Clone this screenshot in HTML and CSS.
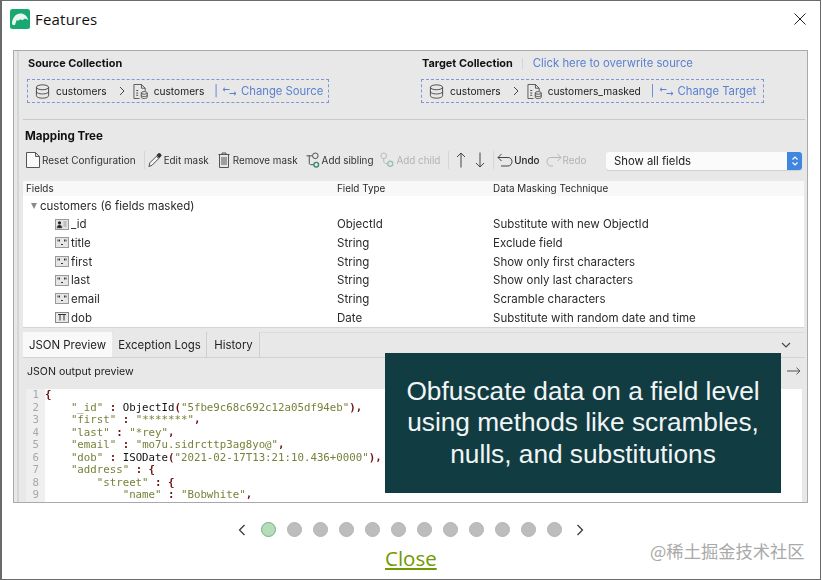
FILE: index.html
```html
<!DOCTYPE html>
<html lang="en">
<head>
<meta charset="utf-8">
<title>Features</title>
<link rel="stylesheet" href="styles.css">
</head>
<body>
<svg class="defs" width="0" height="0" aria-hidden="true">
  <symbol id="db" viewBox="0 0 16 16"><g fill="none" stroke="#444" stroke-width="1"><ellipse cx="8" cy="3.5" rx="6.5" ry="2.6"/><path d="M1.5 3.5v9c0 1.5 3 2.6 6.5 2.600s6.500-1.100 6.500-2.600v-9M1.500 8c0 1.500 3 2.600 6.500 2.600s6.500-1.100 6.500-2.600"/></g></symbol>
  <symbol id="coll" viewBox="0 0 16 16"><g fill="none" stroke="#444" stroke-width=".9"><path d="M1 .5h8l4 4v3M1 .5v15h6M9 .5v4h4"/><path d="M3.500 7h2M3.500 9.500h2M3.500 12h2" stroke-width="1.100"/><ellipse cx="12" cy="9.500" rx="3.200" ry="1.400"/><path d="M8.800 9.500v4.600c0 .8 1.400 1.400 3.200 1.400s3.200-.6 3.200-1.400V9.500M8.800 12c0 .8 1.400 1.400 3.200 1.400s3.200-.6 3.200-1.400"/></g></symbol>
  <symbol id="swap" viewBox="0 0 15 9"><g fill="none" stroke="#5a80d0" stroke-width="1"><path d="M1 2.500h6.500M3 .7 1 2.500l2 1.800M7.500 6.500H14M12 4.700l2 1.800-2 1.800"/></g></symbol>
  <symbol id="fstr" viewBox="0 0 14 11"><rect x=".5" y=".5" width="13" height="10" fill="#e6e6e6" stroke="#999"/><path d="M3 2.500v2M4.500 2.500v2M9.500 2.500v2M11 2.500v2M6 7.500h2" stroke="#333" stroke-width="1"/></symbol>
</svg>
<main class="dialog">
  <header class="titlebar">
    <svg class="logo" viewBox="0 0 20 20"><rect width="20" height="20" rx="2.500" fill="#1aa872"/><path d="M2 14.500C2.300 8.500 6 4.500 10.500 4.500c3.700 0 6.300 2.300 7.500 5.700l-.3.800c-1-.9-2.300-1.500-3.500-1.200l-1.500 1.400-2.400-.9-2 1.400-1.500-.8C6 12.500 5.500 14 5 16H2.700z" fill="#e9f7f0"/></svg>
    <h1 class="title">Features</h1>
    <svg class="close-x" viewBox="0 0 12 12"><path d="M.5.500l11 11M11.500.500l-11 11" stroke="#222" fill="none"/></svg>
  </header>

  <div class="stage">
    <section class="shot">
      <div class="collections">
        <div class="coll coll-source">
          <div class="coll-head"><strong>Source Collection</strong></div>
          <div class="dash dash-source">
            <svg class="i16"><use href="#db"/></svg><span class="name">customers</span>
            <svg class="crumb" viewBox="0 0 6 10"><path d="M1 1l4 4-4 4" fill="none" stroke="#444"/></svg>
            <svg class="i16"><use href="#coll"/></svg><span class="name">customers</span>
            <span class="pipe">|</span><svg class="swap"><use href="#swap"/></svg><span class="link">Change Source</span>
          </div>
        </div>
        <div class="coll">
          <div class="coll-head"><strong>Target Collection</strong><span class="thin-sep"></span><span class="link">Click here to overwrite source</span></div>
          <div class="dash dash-target">
            <svg class="i16"><use href="#db"/></svg><span class="name">customers</span>
            <svg class="crumb" viewBox="0 0 6 10"><path d="M1 1l4 4-4 4" fill="none" stroke="#444"/></svg>
            <svg class="i16"><use href="#coll"/></svg><span class="name">customers_masked</span>
            <span class="pipe">|</span><svg class="swap"><use href="#swap"/></svg><span class="link">Change Target</span>
          </div>
        </div>
      </div>
      <hr class="rule">
      <h2 class="tree-title">Mapping Tree</h2>
      <div class="toolbar">
        <span class="tool t-reset"><svg class="ti" viewBox="0 0 14 16"><path d="M.5.500h9l4 4v11H.5zM9.500.500v4h4" fill="#fafafa" stroke="#555"/></svg>Reset Configuration</span>
        <i class="vsep v1"></i>
        <span class="tool t-edit"><svg class="ti" viewBox="0 0 15 16"><path d="M1 15l1-4 7-7 2.500 2.500-7 7z" fill="#f4f4f4" stroke="#444"/><path d="M9 3l2.500-2.500c1-.6 3.500 1.800 3 3L12 6z" fill="#333"/></svg>Edit mask</span>
        <span class="tool t-remove"><svg class="ti" viewBox="0 0 12 16"><path d="M.5 2.500h11M4 2.500V1h4v1.500M1.500 2.500v13h9v-13M4 5v8M6 5v8M8 5v8" fill="none" stroke="#555"/></svg>Remove mask</span>
        <span class="tool t-sib"><svg class="ti" viewBox="0 0 15 16"><path d="M.5 3.500h6M3.500 3.500v8c0 1 1 1.500 2 1.500h3" fill="none" stroke="#444"/><circle cx="10" cy="3.500" r="3" fill="none" stroke="#444"/><circle cx="11" cy="13" r="2.500" fill="none" stroke="#3b8a6a" stroke-width="1.500"/></svg>Add sibling</span>
        <span class="tool t-child off"><svg class="ti" viewBox="0 0 15 16"><circle cx="4" cy="3.500" r="3" fill="none" stroke="#b5b5b5"/><path d="M4 6.500v3c0 1.500 1.500 2.500 4 2.500" fill="none" stroke="#b5b5b5"/><circle cx="11" cy="12" r="2.700" fill="none" stroke="#9cc4b4" stroke-width="1.500"/></svg>Add child</span>
        <i class="vsep v2"></i>
        <svg class="arrow a-up" viewBox="0 0 10 16"><path d="M5 15.500V1M1 5l4-4 4 4" fill="none" stroke="#444"/></svg>
        <svg class="arrow a-down" viewBox="0 0 10 16"><path d="M5 .5V15M1 11l4 4 4-4" fill="none" stroke="#444"/></svg>
        <i class="vsep v3"></i>
        <span class="tool t-undo"><svg class="tu" viewBox="0 0 16 14"><path d="M4.500 1 1 4.500 4.500 8M1 4.500h10c2.500 0 4 1.700 4 4s-1.500 4.500-4 4.500H4" fill="none" stroke="#444"/></svg><b>Undo</b></span>
        <span class="tool t-redo off"><svg class="tu" viewBox="0 0 16 14"><path d="M11.500 1 15 4.500 11.500 8M15 4.500H5c-2.500 0-4 1.700-4 4s1.500 4.500 4 4.500h2" fill="none" stroke="#b5b5b5"/></svg>Redo</span>
        <div class="select"><span>Show all fields</span><span class="select-btn"><svg viewBox="0 0 8 12"><path d="M1.500 4.500 4 2l2.500 2.500M1.500 7.500 4 10l2.500-2.500" fill="none" stroke="#fff" stroke-width="1.200"/></svg></span></div>
      </div>

      <div class="table">
        <div class="row head"><span>Fields</span><span>Field Type</span><span>Data Masking Technique</span></div>
        <div class="row root"><span class="root-label"><i class="tri"></i>customers (6 fields masked)</span></div>
        <div class="row"><span class="field"><svg class="fi" viewBox="0 0 14 11"><rect x=".5" y=".5" width="13" height="10" fill="#e4e4e4" stroke="#999"/><circle cx="4.500" cy="3.800" r="1.600" fill="#222"/><path d="M2 9c0-2 1-3 2.500-3S7 7 7 9zM8.500 3h3M8.500 5h3M8.500 7h3" fill="#222" stroke="#666" stroke-width=".6"/></svg>_id</span><span>ObjectId</span><span>Substitute with new ObjectId</span></div>
        <div class="row"><span class="field"><svg class="fi"><use href="#fstr"/></svg>title</span><span>String</span><span>Exclude field</span></div>
        <div class="row"><span class="field"><svg class="fi"><use href="#fstr"/></svg>first</span><span>String</span><span>Show only first characters</span></div>
        <div class="row"><span class="field"><svg class="fi"><use href="#fstr"/></svg>last</span><span>String</span><span>Show only last characters</span></div>
        <div class="row"><span class="field"><svg class="fi"><use href="#fstr"/></svg>email</span><span>String</span><span>Scramble characters</span></div>
        <div class="row"><span class="field"><svg class="fi" viewBox="0 0 14 11"><rect x=".5" y=".5" width="13" height="10" fill="#e8e8e8" stroke="#888"/><path d="M3 2.500h8M5 2.500v6M9 2.500v6" stroke="#333" fill="none"/></svg>dob</span><span>Date</span><span>Substitute with random date and time</span></div>
      </div>

      <div class="tabs">
        <span class="tab active">JSON Preview</span>
        <span class="tab">Exception Logs</span>
        <span class="tab">History</span>
        <svg class="tabs-chev" viewBox="0 0 10 6"><path d="M1 1l4 4 4-4" fill="none" stroke="#444" stroke-width="1.100"/></svg>
      </div>
      <div class="preview-bar"><span>JSON output preview</span>
        <svg class="preview-arrow" viewBox="0 0 14 8"><path d="M0 4h13M9.500.7 13 4 9.500 7.300" fill="none" stroke="#555"/></svg>
      </div>
      <div class="code">
        <div class="gutter"><span>1</span><span>2</span><span>3</span><span>4</span><span>5</span><span>6</span><span>7</span><span>8</span><span>9</span></div>
<pre class="src"><b>{</b>
    <s>"_id"</s> <b>:</b> ObjectId<b>(</b><s>"5fbe9c68c692c12a05df94eb"</s><b>),</b>
    <s>"first"</s> <b>:</b> <s>"*******"</s><b>,</b>
    <s>"last"</s> <b>:</b> <s>"*rey"</s><b>,</b>
    <s>"email"</s> <b>:</b> <s>"mo7u.sidrcttp3ag8yo@"</s><b>,</b>
    <s>"dob"</s> <b>:</b> ISODate<b>(</b><s>"2021-02-17T13:21:10.436+0000"</s><b>),</b>
    <s>"address"</s> <b>: {</b>
        <s>"street"</s> <b>: {</b>
            <s>"name"</s> <b>:</b> <s>"Bobwhite"</s><b>,</b></pre>
      </div>
    </section>
    <aside class="callout">Obfuscate data on a field level using methods like scrambles, nulls, and substitutions</aside>
  </div>

  <nav class="pager">
    <svg class="pg-arrow" viewBox="0 0 8 12"><path d="M6.500 1 1.500 6l5 5" fill="none" stroke="#333" stroke-width="1.200"/></svg>
    <span class="dots"><i class="dot on"></i><i class="dot"></i><i class="dot"></i><i class="dot"></i><i class="dot"></i><i class="dot"></i><i class="dot"></i><i class="dot"></i><i class="dot"></i><i class="dot"></i><i class="dot"></i><i class="dot"></i></span>
    <svg class="pg-arrow" viewBox="0 0 8 12"><path d="M1.500 1l5 5-5 5" fill="none" stroke="#333" stroke-width="1.200"/></svg>
  </nav>
  <a class="close-link" href="#">Close</a>
  <div class="watermark">@稀土掘金技术社区</div>
</main>
</body>
</html>
```

FILE: styles.css
```css
* { box-sizing: border-box; }
html, body { margin: 0; padding: 0; background: #fff; }
.defs { position: absolute; }
.dialog {
  position: relative;
  width: 821px;
  height: 580px;
  border: 1px solid #6a6a6a;
  border-left-width: 2px;
  background: #fff;
  overflow: hidden;
  font-family: "Open Sans", "Liberation Sans", sans-serif;
}
.titlebar { display: flex; align-items: center; height: 20px; margin-top: 8px; padding-left: 8px; }
.logo { width: 20px; height: 20px; flex: none; }
.title { margin: 0 0 0 5px; font-size: 15px; font-weight: 400; color: #111; line-height: 20px; letter-spacing: .2px; }
.close-x { width: 12px; height: 12px; margin-left: auto; margin-right: 14px; }

.stage { position: relative; width: 795px; margin: 21px 0 0 11px; }
.shot {
  height: 453px;
  border: 1px solid #a9a9a9;
  background: linear-gradient(90deg, #e8e8e8 3px, #d6d6d6 3px, #d6d6d6 5px, #e8e8e8 5px);
  font-family: Inter, "Liberation Sans", sans-serif;
  font-size: 11px;
  color: #222;
  filter: blur(.4px);
  overflow: hidden;
}
.collections { display: flex; padding: 5px 0 0 13px; }
.coll-source { width: 394px; flex: none; }
.coll-head { display: flex; align-items: center; height: 14px; font-size: 10.900px; color: #111; padding-left: 1px; white-space: nowrap; }
.thin-sep { width: 1px; height: 11px; background: #d4d4d4; margin: 0 9.500px; }
.link { color: #5a80d0; font-size: 11.300px; white-space: nowrap; }
.dash {
  display: flex;
  align-items: center;
  height: 24px;
  margin-top: 9px;
  border: 1px dashed #7f95dc;
  padding-left: 7px;
  font-size: 10.200px;
  white-space: nowrap;
}
.dash-source { width: 302px; }
.dash-target { width: 343px; }
.i16 { width: 15px; height: 15px; flex: none; }
.name { margin-left: 6px; color: #1c1c1c; }
.crumb { width: 6px; height: 10px; margin: 0 8px 0 12px; flex: none; }
.pipe { margin: 0 4px 0 10px; color: #5a80d0; font-size: 11px; }
.swap { width: 15px; height: 9px; margin-right: 4px; flex: none; }

.rule { height: 1px; margin: 16px 2px 0 9px; border: 0; background: #c9c9c9; }
.tree-title { margin: 9px 0 0 11px; font-size: 11.600px; line-height: 14px; font-weight: 700; color: #111; }

.toolbar { display: flex; align-items: center; height: 20px; margin-top: 7px; padding: 0 5px 0 12px; font-size: 9.850px; color: #333; white-space: nowrap; }
.tool { display: flex; align-items: center; flex: none; }
.t-reset { font-size: 10px; }
.ti { width: 14px; height: 16px; margin-right: 2px; flex: none; }
.tu { width: 16px; height: 14px; margin-right: 1px; flex: none; }
.off { color: #b2b2b2; }
.tool b { font-weight: 500; color: #222; }
.vsep { width: 1px; height: 18px; background: #d6d6d6; flex: none; }
.v1 { margin: 0 3px 0 8px; }
.t-remove { margin-left: 8px; }
.t-sib { margin-left: 8px; }
.t-child { margin-left: 7px; }
.v2 { margin-left: 8px; }
.arrow { width: 10px; height: 16px; flex: none; }
.a-up { margin-left: 7px; }
.a-down { margin-left: 9px; }
.v3 { margin: 0 3px 0 8px; }
.t-redo { margin-left: 6px; }
.select {
  display: flex;
  align-items: center;
  justify-content: space-between;
  width: 196px;
  height: 18px;
  margin: 2px 0 0 auto;
  padding-left: 8px;
  background: #fbfbfb;
  border-radius: 3px;
  font-size: 11.300px;
  color: #222;
  box-shadow: 0 1px 1px #cfcfcf;
}
.select-btn { display: flex; align-items: center; justify-content: center; width: 15px; height: 18px; background: #3f86e0; border-radius: 0 3px 3px 0; }
.select-btn svg { width: 8px; height: 12px; }

.table { width: 781px; height: 147px; margin: 11px 0 0 9px; background: #fff; border-bottom: 1px solid #d4d4d4; font-size: 11.500px; }
.row { display: grid; grid-template-columns: 311px 156px 1fr; align-items: center; height: 18.670px; padding: 0 0 1.500px 3px; color: #2a2a2a; }
.row.head { height: 15px; font-size: 9.900px; background: #f8f8f8; margin-bottom: 1px; }
.root-label { display: flex; align-items: center; padding-left: 5px; grid-column: 1 / 3; }
.tri { width: 0; height: 0; margin-right: 3px; border: 3.500px solid transparent; border-top: 6px solid #8a8a8a; border-bottom: 0; }
.field { display: flex; align-items: center; padding-left: 29px; }
.fi { width: 14px; height: 11px; margin-right: 2px; flex: none; }

.tabs { position: relative; display: flex; align-items: flex-end; width: 782px; height: 26px; margin: 4px 0 0 9px; border-top: 1px solid #dcdcdc; border-bottom: 1px solid #d2d2d2; font-size: 11.400px; }
.tab { display: flex; align-items: center; justify-content: center; height: 25px; margin-right: 1px; padding: 0 4px; background: #e8e8e8; border-right: 1px solid #cfcfcf; color: #222; }
.tab.active { width: 89px; background: #f9f9f9; border-right: 0; }
.tab:nth-child(2) { width: 94px; }
.tab:nth-child(3) { width: 52px; }
.tabs-chev { position: absolute; right: 14px; top: 9px; width: 10px; height: 6px; }
.preview-bar { display: flex; align-items: center; justify-content: space-between; width: 782px; height: 31px; margin-left: 9px; padding: 0 4px 5px 4px; font-size: 10.600px; color: #222; }
.preview-arrow { width: 14px; height: 8px; }
.code { display: flex; width: 776px; height: 113px; margin-left: 12px; background: #fff; overflow: hidden; }
.gutter { display: flex; flex-direction: column; width: 19px; background: #efefef; font-family: "DejaVu Sans Mono", monospace; font-size: 10.750px; line-height: 12.550px; color: #a8a8a8; text-align: right; padding-right: 6px; flex: none; }
.src { margin: 0; padding: 0; font-family: "DejaVu Sans Mono", monospace; font-size: 10.750px; line-height: 12.550px; color: #111; }
.src s { text-decoration: none; color: #76823a; }
.src b { font-weight: 700; color: #6d1414; }

.callout {
  position: absolute;
  left: 372px;
  top: 303px;
  width: 396px;
  height: 140px;
  padding-top: 22.500px;
  background: #113c42;
  color: #f1f5f5;
  font-family: "Liberation Sans", Arial, sans-serif;
  font-size: 26.250px;
  line-height: 31.500px;
  text-align: center;
}

.pager { display: flex; align-items: center; height: 15px; margin: 19px 0 0 236px; }
.pg-arrow { width: 8px; height: 12px; flex: none; }
.dots { display: flex; gap: 11px; margin: 0 14px 0 15px; }
.dot { width: 15px; height: 15px; border-radius: 50%; background: #bdbdbd; border: 1px solid #b4b4b4; }
.dot.on { background: #b7dcba; border-color: #72ad85; }
.close-link {
  display: block;
  width: max-content;
  margin: 9px 0 0 383px;
  font-size: 20.500px;
  line-height: 24px;
  color: #6f9a00;
  text-decoration: underline;
  text-underline-offset: 2px;
}
.watermark {
  position: absolute;
  left: 648px;
  bottom: 18px;
  font-family: "Noto Sans CJK SC", sans-serif;
  font-size: 17.300px;
  line-height: 20px;
  color: #a9a9a9;
}
```
